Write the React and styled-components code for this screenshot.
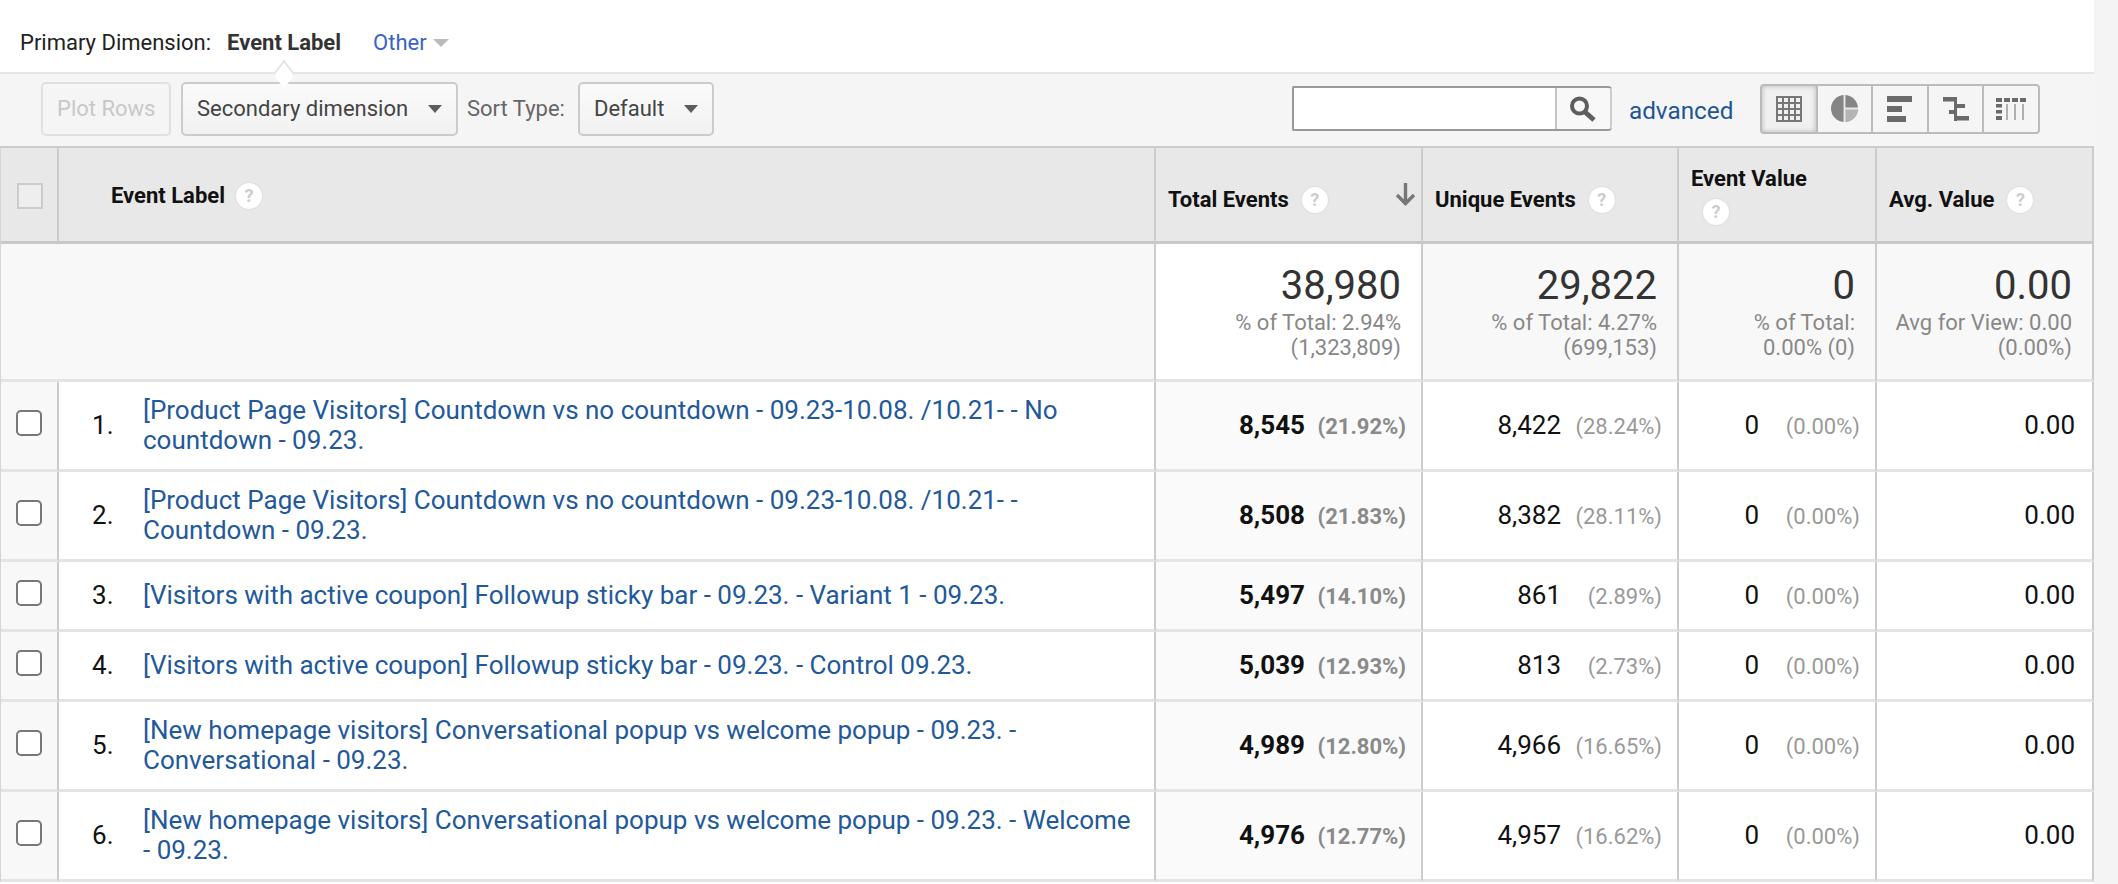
import styled, { createGlobalStyle } from 'styled-components';

const GlobalStyle = createGlobalStyle`
  html, body {
    margin: 0;
    padding: 0;
    height: 884px;
    overflow: hidden;
    background: #f4f4f4;
    font-family: Roboto, "Liberation Sans", sans-serif;
  }
  * {
    box-sizing: border-box;
  }
`;

const rows = [
  {
    label: '[Product Page Visitors] Countdown vs no countdown - 09.23-10.08. /10.21- - No countdown - 09.23.',
    total: '8,545', totalPct: '(21.92%)', unique: '8,422', uniquePct: '(28.24%)', tall: true,
  },
  {
    label: '[Product Page Visitors] Countdown vs no countdown - 09.23-10.08. /10.21- - Countdown - 09.23.',
    total: '8,508', totalPct: '(21.83%)', unique: '8,382', uniquePct: '(28.11%)', tall: true,
  },
  {
    label: '[Visitors with active coupon] Followup sticky bar - 09.23. - Variant 1 - 09.23.',
    total: '5,497', totalPct: '(14.10%)', unique: '861', uniquePct: '(2.89%)',
  },
  {
    label: '[Visitors with active coupon] Followup sticky bar - 09.23. - Control 09.23.',
    total: '5,039', totalPct: '(12.93%)', unique: '813', uniquePct: '(2.73%)',
  },
  {
    label: '[New homepage visitors] Conversational popup vs welcome popup - 09.23. - Conversational - 09.23.',
    total: '4,989', totalPct: '(12.80%)', unique: '4,966', uniquePct: '(16.65%)', tall: true,
  },
  {
    label: '[New homepage visitors] Conversational popup vs welcome popup - 09.23. - Welcome - 09.23.',
    total: '4,976', totalPct: '(12.77%)', unique: '4,957', uniquePct: '(16.62%)', tall: true,
  },
];

function Caret() {
  return (
    <svg width="14" height="8" viewBox="0 0 14 8" fill="#5c5c5c">
      <path d="M0 0h14L7 8z" />
    </svg>
  );
}

function SearchIcon() {
  return (
    <svg width="28" height="26" viewBox="0 0 28 26" fill="none" stroke="#5e5e5e">
      <circle cx="10.5" cy="10" r="7.5" strokeWidth="4" />
      <path d="M16 16l9 8" strokeWidth="5" />
    </svg>
  );
}

function GridIcon() {
  return (
    <svg width="26" height="26" viewBox="0 0 26 26" fill="none" stroke="#777" strokeWidth="2">
      <rect x="1" y="1" width="24" height="24" />
      <path d="M7 1v24M13 1v24M19 1v24M1 7h24M1 13h24M1 19h24" />
    </svg>
  );
}

function PieIcon() {
  return (
    <svg width="27" height="27" viewBox="0 0 28 28">
      <circle cx="14" cy="14" r="14" fill="#858585" />
      <path d="M14 14h14a14 14 0 0 1-14 14z" fill="#b4b4b4" />
      <path d="M14 0v28M14 14h14" stroke="#e8e8e8" strokeWidth="2" fill="none" />
    </svg>
  );
}

function BarsIcon() {
  return (
    <svg width="25" height="26" viewBox="0 0 25 26" fill="#6a6a6a">
      <rect width="25" height="6" />
      <rect y="10" width="15" height="6" />
      <rect y="20" width="19" height="6" />
    </svg>
  );
}

function PivotIcon() {
  return (
    <svg width="26" height="24" viewBox="0 0 26 24" fill="#6a6a6a">
      <rect width="14" height="4.5" />
      <rect x="11" width="3" height="24" />
      <rect x="14" y="7" width="8" height="4" />
      <rect x="6" y="13" width="8" height="4" />
      <rect x="13" y="19" width="13" height="4.5" />
    </svg>
  );
}

function ColumnsIcon() {
  return (
    <svg width="30" height="22" viewBox="0 0 30 22" fill="#6a6a6a">
      <rect width="6" height="4" />
      <rect x="8" width="6" height="4" />
      <rect x="16" width="6" height="4" />
      <rect x="24" width="6" height="4" />
      <rect y="6" width="6" height="3.5" />
      <rect y="12" width="6" height="3.5" />
      <rect y="18" width="6" height="4" />
      <rect x="10" y="6" width="2" height="16" fill="#b0b0b0" />
      <rect x="18" y="6" width="2" height="16" fill="#b0b0b0" />
      <rect x="26" y="6" width="2" height="16" fill="#b0b0b0" />
    </svg>
  );
}

function SortArrowIcon() {
  return (
    <svg width="21" height="23" viewBox="0 0 21 23" fill="none" stroke="#777" strokeWidth="3.4">
      <path d="M10.5 0v20M2 12l8.5 8.5L19 12" />
    </svg>
  );
}

const Page = styled.div`
  display: flex;
  width: 2118px;
  height: 884px;
  overflow: hidden;
`;

const Main = styled.div`
  width: 2094px;
  flex: none;
  background: #fff;
`;

const Gutter = styled.div`
  flex: 1;
  background: #f4f4f4;
`;

const DimensionBar = styled.div`
  height: 72px;
  padding: 13px 0 0 20px;
  display: flex;
  align-items: center;
  font-size: 22px;
  color: #222;
`;

const CurrentDimension = styled.span`
  font-weight: 700;
  color: #333;
  margin-left: 16px;
`;

const OtherLink = styled.a`
  color: #3a62c9;
  margin-left: 32px;
`;

const OtherCaret = styled.span`
  width: 0;
  height: 0;
  margin-left: 6px;
  border: 8px solid transparent;
  border-top: 8px solid #bbb;
  border-bottom: none;
`;

const Toolbar = styled.div`
  position: relative;
  height: 74px;
  display: flex;
  align-items: center;
  padding: 0 0 3px 41px;
  background: #f5f5f5;
  border-top: 2px solid #e4e4e4;

  &::before {
    content: '';
    position: absolute;
    left: 275px;
    top: -9px;
    width: 16px;
    height: 16px;
    background: #fff;
    border-top: 2px solid #e4e4e4;
    border-left: 2px solid #e4e4e4;
    transform: rotate(45deg) skew(8deg, 8deg);
  }
`;

const ToolButton = styled.div`
  height: 54px;
  display: flex;
  align-items: center;
  justify-content: space-between;
  padding: 0 14px;
  width: ${(p) => p.$width}px;
  margin-right: ${(p) => p.$gap || 0}px;
  font-size: 22px;
  line-height: 24px;
  white-space: nowrap;
  color: ${(p) => (p.$disabled ? '#c8c8c8' : '#444')};
  border: 2px solid ${(p) => (p.$disabled ? '#e0e0e0' : '#cbcbcb')};
  border-radius: 5px;
  background: ${(p) => (p.$disabled ? 'transparent' : 'linear-gradient(#fbfbfb, #f1f1f1)')};
`;

const SortLabel = styled.span`
  font-size: 22px;
  color: #666;
  margin-right: 13px;
`;

const SearchBox = styled.div`
  margin-left: 578px;
  width: 320px;
  height: 45px;
  display: flex;
  background: #fff;
  border: 2px solid #999;
  border-right: none;
  border-radius: 2px 4px 4px 2px;
`;

const SearchInput = styled.div`
  flex: 1;
  background: #fff;
`;

const SearchButton = styled.div`
  width: 57px;
  display: flex;
  align-items: center;
  justify-content: center;
  background: #f8f8f8;
  border-left: 2px solid #c4c4c4;
  border-right: 2px solid #ccc;
  border-radius: 0 4px 4px 0;
`;

const AdvancedLink = styled.a`
  width: 104px;
  margin: 3px 27px 0 17px;
  font-size: 24.3px;
  white-space: nowrap;
  color: #1f5596;
`;

const ViewSwitch = styled.div`
  display: flex;
  width: 280px;
  height: 50px;
  border: 2px solid #bbb;
  border-radius: 4px;
`;

const ViewButton = styled.div`
  flex: 1;
  display: flex;
  align-items: center;
  justify-content: center;
  border-right: 2px solid #bbb;
  background: ${(p) => (p.$active ? '#f0f0f0' : 'transparent')};
  box-shadow: ${(p) => (p.$active ? 'inset 0 0 5px rgba(0, 0, 0, 0.25)' : 'none')};

  &:last-child {
    border-right: none;
  }
`;

const Table = styled.table`
  width: 2094px;
  table-layout: fixed;
  border-collapse: separate;
  border-spacing: 0;
  border-top: 2px solid #ccc;
  border-left: 1px solid #d4d4d4;
`;

const HeaderCell = styled.th`
  height: 96px;
  padding: ${(p) => p.$top || 2}px 0 0 ${(p) => p.$pad || 0}px;
  background: #e8e8e8;
  font-size: 22px;
  font-weight: 700;
  line-height: 24px;
  color: #111;
  text-align: left;
  border-right: 2px solid #ccc;
  border-bottom: 3px solid #c8c8c8;
`;

const HeaderInner = styled.div`
  display: flex;
  align-items: center;
  flex-wrap: wrap;
  gap: ${(p) => (p.$stack ? '8px 40px' : '0')};
  padding-right: 5px;
`;

const HelpBadge = styled.span`
  width: 26px;
  height: 26px;
  margin-left: ${(p) => p.$left || 13}px;
  display: inline-flex;
  align-items: center;
  justify-content: center;
  border-radius: 50%;
  background: #fff;
  box-shadow: 0 0 2px rgba(0, 0, 0, 0.12);
  font-size: 18px;
  font-weight: 700;
  color: #ccc;
`;

const SortArrow = styled.span`
  display: flex;
  margin: -10px 0 0 auto;
`;

const CheckCell = styled.td`
  height: ${(p) => (p.$tall ? 90 : 70)}px;
  padding: 0 0 6px 15px;
  background: #f8f8f8;
  border-right: 2px solid #ccc;
  border-bottom: 3px solid #e4e4e4;
`;

const HeaderCheckCell = styled(HeaderCell)`
  padding: 2px 0 0 16px;
`;

const Checkbox = styled.div`
  width: 26px;
  height: 26px;
  background: #fff;
  border: 2px solid #777;
  border-radius: 5px;
`;

const HeaderCheckbox = styled.div`
  width: 26px;
  height: 26px;
  background: #eee;
  border: 2px solid #ccc;
`;

const IndexCell = styled.td`
  padding: 0 0 2px 33px;
  font-size: 26px;
  color: #111;
  background: #fff;
  border-bottom: 3px solid #e4e4e4;
`;

const LabelCell = styled.td`
  padding: 0 20px 1px 0;
  font-size: 26px;
  line-height: 30px;
  background: #fff;
  border-right: 2px solid #ccc;
  border-bottom: 3px solid #e4e4e4;
`;

const RowLink = styled.a`
  color: #22599b;
`;

const MetricCell = styled.td`
  padding: 0 15px 2px 0;
  background: ${(p) => (p.$sorted ? '#fafafa' : '#fff')};
  border-right: 2px solid #ccc;
  border-bottom: 3px solid #e4e4e4;
`;

const MetricGrid = styled.div`
  display: grid;
  grid-template-columns: 1fr 101px;
  align-items: baseline;
  text-align: right;
`;

const MetricValue = styled.span`
  font-size: 26px;
  font-weight: ${(p) => (p.$bold ? 700 : 400)};
  color: #111;
`;

const MetricPct = styled.span`
  font-size: 22px;
  font-weight: ${(p) => (p.$bold ? 700 : 400)};
  color: ${(p) => (p.$bold ? '#8a8a8a' : '#999')};
`;

const PlainValue = styled.div`
  font-size: 26px;
  color: #111;
  text-align: right;
  padding-right: 2px;
`;

const SummaryBlank = styled.td`
  height: 138px;
  background: #f8f8f8;
  border-right: 2px solid #ccc;
  border-bottom: 3px solid #e4e4e4;
`;

const SummaryCell = styled.td`
  padding: 0 20px 0 0;
  vertical-align: top;
  text-align: right;
  background: ${(p) => (p.$sorted ? '#fff' : '#f8f8f8')};
  border-right: 2px solid #ccc;
  border-bottom: 3px solid #e4e4e4;
`;

const SummaryValue = styled.div`
  margin-top: 18px;
  font-size: 40px;
  line-height: 48px;
  color: #333;
`;

const SummaryNote = styled.div`
  font-size: 22px;
  line-height: 25px;
  color: #888;
`;

const columnWidths = [58, 84, 1013, 267, 256, 198, 217];

function Help({ left }) {
  return <HelpBadge $left={left}>?</HelpBadge>;
}

export default function App() {
  return (
    <Page>
      <GlobalStyle />
      <Main>
        <DimensionBar>
          Primary Dimension:
          <CurrentDimension>Event Label</CurrentDimension>
          <OtherLink>Other</OtherLink>
          <OtherCaret />
        </DimensionBar>

        <Toolbar>
          <ToolButton $disabled $width={130} $gap={10}>Plot Rows</ToolButton>
          <ToolButton $width={277} $gap={9}>Secondary dimension <Caret /></ToolButton>
          <SortLabel>Sort Type:</SortLabel>
          <ToolButton $width={136}>Default <Caret /></ToolButton>
          <SearchBox>
            <SearchInput />
            <SearchButton><SearchIcon /></SearchButton>
          </SearchBox>
          <AdvancedLink>advanced</AdvancedLink>
          <ViewSwitch>
            <ViewButton $active><GridIcon /></ViewButton>
            <ViewButton><PieIcon /></ViewButton>
            <ViewButton><BarsIcon /></ViewButton>
            <ViewButton><PivotIcon /></ViewButton>
            <ViewButton><ColumnsIcon /></ViewButton>
          </ViewSwitch>
        </Toolbar>

        <Table>
          <colgroup>
            {columnWidths.map((width, i) => <col key={i} width={width} />)}
          </colgroup>
          <thead>
            <tr>
              <HeaderCheckCell><HeaderCheckbox /></HeaderCheckCell>
              <HeaderCell colSpan={2} $pad={52}>
                <HeaderInner>Event Label <Help left={11} /></HeaderInner>
              </HeaderCell>
              <HeaderCell $pad={12} $top={10}>
                <HeaderInner>Total Events <Help /><SortArrow><SortArrowIcon /></SortArrow></HeaderInner>
              </HeaderCell>
              <HeaderCell $pad={12} $top={10}>
                <HeaderInner>Unique Events <Help /></HeaderInner>
              </HeaderCell>
              <HeaderCell $pad={12}>
                <HeaderInner $stack>Event Value <Help left={12} /></HeaderInner>
              </HeaderCell>
              <HeaderCell $pad={12} $top={10}>
                <HeaderInner>Avg. Value <Help /></HeaderInner>
              </HeaderCell>
            </tr>
          </thead>
          <tbody>
            <tr>
              <SummaryBlank colSpan={3} />
              <SummaryCell $sorted>
                <SummaryValue>38,980</SummaryValue>
                <SummaryNote>% of Total: 2.94%<br />(1,323,809)</SummaryNote>
              </SummaryCell>
              <SummaryCell>
                <SummaryValue>29,822</SummaryValue>
                <SummaryNote>% of Total: 4.27%<br />(699,153)</SummaryNote>
              </SummaryCell>
              <SummaryCell>
                <SummaryValue>0</SummaryValue>
                <SummaryNote>% of Total:<br />0.00% (0)</SummaryNote>
              </SummaryCell>
              <SummaryCell>
                <SummaryValue>0.00</SummaryValue>
                <SummaryNote>Avg for View: 0.00<br />(0.00%)</SummaryNote>
              </SummaryCell>
            </tr>
            {rows.map((row, i) => (
              <tr key={row.label}>
                <CheckCell $tall={row.tall}><Checkbox /></CheckCell>
                <IndexCell>{i + 1}.</IndexCell>
                <LabelCell><RowLink>{row.label}</RowLink></LabelCell>
                <MetricCell $sorted>
                  <MetricGrid>
                    <MetricValue $bold>{row.total}</MetricValue>
                    <MetricPct $bold>{row.totalPct}</MetricPct>
                  </MetricGrid>
                </MetricCell>
                <MetricCell>
                  <MetricGrid>
                    <MetricValue>{row.unique}</MetricValue>
                    <MetricPct>{row.uniquePct}</MetricPct>
                  </MetricGrid>
                </MetricCell>
                <MetricCell>
                  <MetricGrid>
                    <MetricValue>0</MetricValue>
                    <MetricPct>(0.00%)</MetricPct>
                  </MetricGrid>
                </MetricCell>
                <MetricCell><PlainValue>0.00</PlainValue></MetricCell>
              </tr>
            ))}
          </tbody>
        </Table>
      </Main>
      <Gutter />
    </Page>
  );
}
